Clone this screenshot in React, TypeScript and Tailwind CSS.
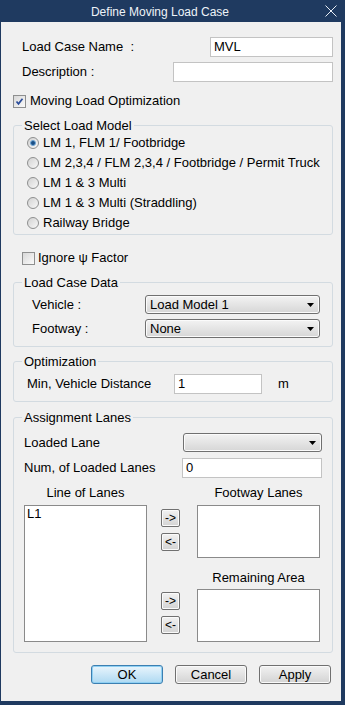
import React from "react";

const font = { fontFamily: '"Liberation Sans", Arial, sans-serif' };

function Check({ checked }: { checked?: boolean }) {
  return (
    <span className="w-[13px] h-[13px] border border-[#8e8f8f] bg-gradient-to-br from-[#d8d8d8] to-[#fafafa] flex items-center justify-center shrink-0">
      {checked && (
        <svg width="11" height="11" viewBox="0 0 11 11">
          <path d="M2.5 5.5 L4.5 7.8 L8.5 2.8" stroke="#2a4c9a" strokeWidth="1.7" fill="none" />
        </svg>
      )}
    </span>
  );
}

function Radio({ checked }: { checked?: boolean }) {
  return (
    <span className="w-[12px] h-[12px] rounded-full border border-[#8e8f8f] bg-gradient-to-br from-[#d2d2d2] to-[#f8f8f8] flex items-center justify-center shrink-0">
      {checked && <span className="w-[6px] h-[6px] rounded-full bg-[#1b4f86] border border-[#6fa8d8]" />}
    </span>
  );
}

function Combo({ text, w }: { text: string; w: string }) {
  return (
    <div className={`${w} h-[19px] rounded-[3px] border border-[#707070] bg-gradient-to-b from-[#f3f3f3] to-[#d6d6d6] flex items-center pl-[4px] pr-[5px] shadow-[inset_0_0_0_1px_#fbfbfb]`}>
      <span className="leading-[15px]">{text}</span>
      <svg className="ml-auto" width="7" height="4" viewBox="0 0 7 4">
        <path d="M0 0 H7 L3.5 4 Z" fill="#000" />
      </svg>
    </div>
  );
}

function Input({ text, w }: { text?: string; w: string }) {
  return (
    <div className={`${w} h-[20px] border border-[#c3c3c3] bg-white pl-[3px] pt-[1px] leading-[16px]`}>{text}</div>
  );
}

function Small({ t }: { t: string }) {
  return (
    <div className="w-[19px] h-[18px] rounded-[2px] border border-[#707070] bg-gradient-to-b from-[#f2f2f2] to-[#d3d3d3] flex items-center justify-center text-[12px] leading-[12px] shadow-[inset_0_0_0_1px_#fafafa]">
      {t}
    </div>
  );
}

function Btn({ t, primary }: { t: string; primary?: boolean }) {
  return (
    <div
      className={
        primary
          ? "w-[72px] h-[19px] rounded-[3px] border border-[#3c7fb1] bg-gradient-to-b from-[#e9f5fc] to-[#aed9f2] flex items-center justify-center shadow-[inset_0_0_0_1px_#8fd0f3]"
          : "w-[72px] h-[19px] rounded-[3px] border border-[#707070] bg-gradient-to-b from-[#f2f2f2] to-[#d3d3d3] flex items-center justify-center shadow-[inset_0_0_0_1px_#fafafa]"
      }
    >
      {t}
    </div>
  );
}

function Group({ label, children, className }: { label: string; children: React.ReactNode; className?: string }) {
  return (
    <fieldset className={`border border-[#d3dbe1] rounded-[3px] ${className ?? ""}`}>
      <legend className="ml-[8px] px-[2px] leading-[15px]">{label}</legend>
      {children}
    </fieldset>
  );
}

export default function App() {
  const radios = [
    "LM 1, FLM 1/ Footbridge",
    "LM 2,3,4 / FLM 2,3,4 / Footbridge / Permit Truck",
    "LM 1 & 3 Multi",
    "LM 1 & 3 Multi (Straddling)",
    "Railway Bridge",
  ];
  return (
    <div style={font} className="w-[345px] h-[705px] bg-[#1f3a60] flex flex-col pl-[1px] pr-[4px] pb-[4px] text-[13px] text-black">
      <div className="h-[22px] flex items-center -ml-[1px] -mr-[4px]">
        <div className="flex-1 text-center text-[12px] text-[#eef3f8] leading-[14px] pt-[1px]">Define Moving Load Case</div>
        <div className="w-[25px] pl-[5px]">
          <svg width="12" height="12" viewBox="0 0 12 12">
            <path d="M0.5 0.5 L11.5 11.5 M11.5 0.5 L0.5 11.5" stroke="#e8eef5" strokeWidth="1" />
          </svg>
        </div>
      </div>
      <div className="flex-1 bg-[#f0f0f0] pl-[12px] pr-[8px] flex flex-col">
        <div className="mt-[15px] h-[20px] flex items-center justify-between">
          <span className="pl-[9px]">Load Case Name&nbsp;&nbsp;:</span>
          <Input text="MVL" w="w-[123px]" />
        </div>
        <div className="mt-[5px] h-[20px] flex items-center justify-between">
          <span className="pl-[9px]">Description :</span>
          <Input w="w-[160px]" />
        </div>
        <div className="mt-[11px] h-[16px] flex items-center gap-[4px]">
          <Check checked />
          <span>Moving Load Optimization</span>
        </div>

        <Group label="Select Load Model" className="mt-[9px] pb-[1px]">
          <div className="pl-[13px]">
            {radios.map((r, i) => (
              <div key={r} className="h-[20px] flex items-center gap-[4px]">
                <Radio checked={i === 0} />
                <span>{r}</span>
              </div>
            ))}
          </div>
        </Group>

        <div className="mt-[15px] h-[16px] flex items-center gap-[3px] pl-[9px]">
          <Check />
          <span>Ignore ψ Factor</span>
        </div>

        <Group label="Load Case Data" className="mt-[9px] pb-[8px]">
          <div className="pl-[18px] pr-[12px] flex flex-col">
            <div className="mt-[5px] h-[19px] flex items-center justify-between">
              <span>Vehicle :</span>
              <Combo text="Load Model 1" w="w-[175px]" />
            </div>
            <div className="mt-[5px] h-[19px] flex items-center justify-between">
              <span>Footway :</span>
              <Combo text="None" w="w-[175px]" />
            </div>
          </div>
        </Group>

        <Group label="Optimization" className="mt-[7px] pb-[7px]">
          <div className="pl-[13px] mt-[5px] h-[20px] flex items-center">
            <span className="w-[147px]">Min, Vehicle Distance</span>
            <Input text="1" w="w-[88px]" />
            <span className="ml-[16px]">m</span>
          </div>
        </Group>

        <Group label="Assignment Lanes" className="mt-[8px] pb-[10px]">
          <div className="pl-[10px] pr-[10px] flex flex-col">
            <div className="mt-[8px] h-[19px] flex items-center justify-between">
              <span>Loaded Lane</span>
              <Combo text="" w="w-[139px]" />
            </div>
            <div className="mt-[6px] h-[20px] flex items-center justify-between">
              <span>Num, of Loaded Lanes</span>
              <Input text="0" w="w-[140px]" />
            </div>
            <div className="mt-[8px] flex">
              <div className="w-[123px] flex flex-col">
                <div className="h-[14px] leading-[14px] text-center">Line of Lanes</div>
                <div className="mt-[5px] h-[137px] border border-[#8a8a8a] bg-white pl-[2px] leading-[15px]">L1</div>
              </div>
              <div className="ml-[14px] w-[19px] flex flex-col">
                <div className="mt-[23px]"><Small t="->" /></div>
                <div className="mt-[6px]"><Small t="<-" /></div>
                <div className="mt-[41px]"><Small t="->" /></div>
                <div className="mt-[6px]"><Small t="<-" /></div>
              </div>
              <div className="ml-[17px] w-[123px] flex flex-col">
                <div className="h-[14px] leading-[14px] text-center">Footway Lanes</div>
                <div className="mt-[5px] h-[53px] border border-[#8a8a8a] bg-white" />
                <div className="mt-[13px] h-[14px] leading-[14px] text-center">Remaining Area</div>
                <div className="mt-[4px] h-[53px] border border-[#8a8a8a] bg-white" />
              </div>
            </div>
          </div>
        </Group>

        <div className="mt-[12px] flex justify-end gap-[12px] pr-[2px]">
          <Btn t="OK" primary />
          <Btn t="Cancel" />
          <Btn t="Apply" />
        </div>
      </div>
    </div>
  );
}
